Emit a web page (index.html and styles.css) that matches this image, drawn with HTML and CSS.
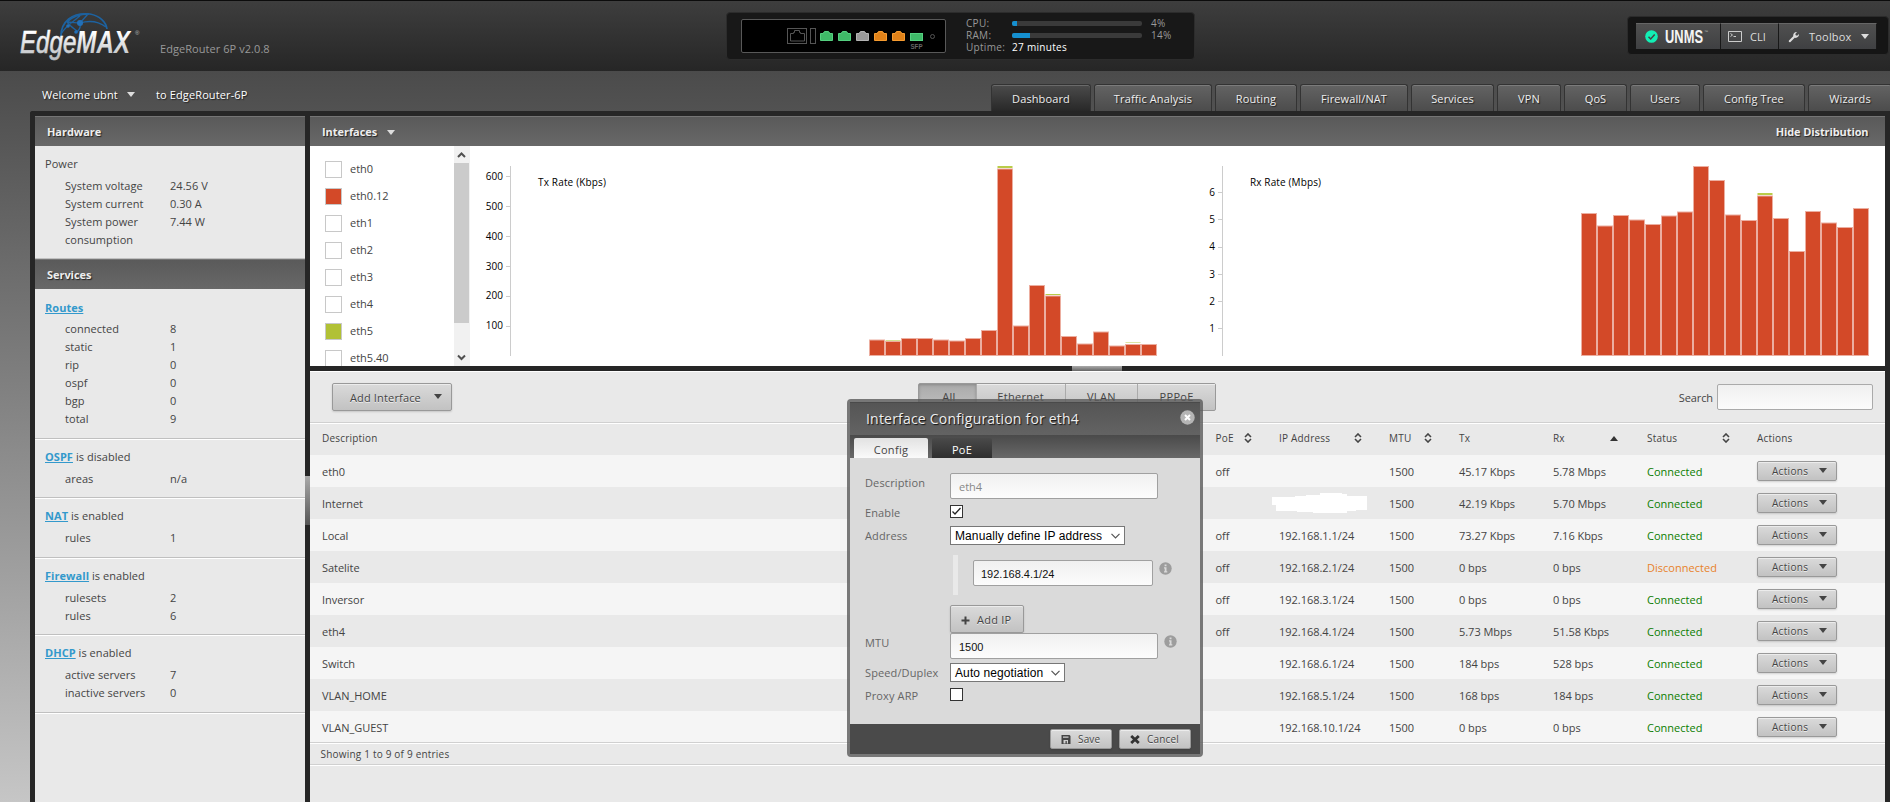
FILE: index.html
```html
<!DOCTYPE html>
<html lang="en">
<head>
<meta charset="utf-8">
<title>EdgeRouter 6P</title>
<link rel="stylesheet" href="styles.css">
</head>
<body>
<svg class="defs" width="0" height="0">
  <symbol id="sort" viewBox="0 0 8 10"><path d="M1 4 4 1 7 4M1 6l3 3 3-3" fill="none" stroke="#444" stroke-width="1.6"/></symbol>
  <symbol id="info" viewBox="0 0 13 13"><circle cx="6.5" cy="6.5" r="6.2" fill="#9d9d9d"/><path d="M5.6 2.5h1.9v1.7H5.600zM5 5.300h2.500v4H8.300v1.200H5v-1.200h.7V6.500H5z" fill="#dadada"/></symbol>
  <symbol id="rj45" viewBox="0 0 13 10"><path d="M.5 2.500h3V1.500h1V.5h4v1h1v1h3v7H.5z" fill="var(--f)" stroke="var(--s)"/></symbol>
</svg>

<header class="top">
  <div class="logo">
    <svg width="124" height="50" viewBox="0 0 124 50">
      <defs><linearGradient id="lg" x1="0" y1="0" x2="0" y2="1"><stop offset="0.2" stop-color="#fff"/><stop offset="1" stop-color="#b9bcc0"/></linearGradient></defs>
      <g fill="none" stroke="#1d62a0" stroke-width="1.300">
        <path d="M43 24C43 10 54 0 72 2c10 2 16 8 17 15" stroke-width="1.700"/>
        <path d="M43 22c3-6 10-11 19-18M49 10c5 0 9 1 13 1M49 10c3 4 6 6 10 9M62 11c1 3 0 6-3 9M62 11c10-3 18-2 26 4M49 10c6-6 14-8 22-8M62 11l8-9"/>
      </g>
      <g fill="#2270b8"><circle cx="62" cy="11" r="3"/><circle cx="50" cy="14" r="1.800"/><circle cx="58" cy="20" r="1.800"/></g>
      <text x="2" y="41" font-family="Liberation Sans" font-style="italic" font-size="31" fill="url(#lg)" textLength="110" lengthAdjust="spacingAndGlyphs"><tspan stroke="url(#lg)" stroke-width=".6">Edge</tspan><tspan font-weight="bold">MAX</tspan></text>
      <text x="117" y="23" font-family="Liberation Sans" font-size="6" fill="#bbb">®</text>
    </svg>
  </div>
  <div class="model">EdgeRouter 6P v2.0.8</div>
  <div class="stats">
    <div class="device">
      <svg width="203" height="32" viewBox="0 0 203 32">
        <g fill="none" stroke="#555"><rect x="45.500" y="8.500" width="19" height="15"/><path d="M48.500 13.500h3v-1h1v-2h5v2h1v1h4v7.500h-14z"/><rect x="68.500" y="8.500" width="5" height="15"/></g>
        <use href="#rj45" class="green" x="78" y="11" width="13" height="10"/>
        <use href="#rj45" class="green" x="96" y="11" width="13" height="10"/>
        <use href="#rj45" class="gray" x="114" y="11" width="13" height="10"/>
        <use href="#rj45" class="orange" x="132" y="11" width="13" height="10"/>
        <use href="#rj45" class="orange" x="150" y="11" width="13" height="10"/>
        <rect x="168.500" y="13.500" width="12" height="7" fill="#3fb968" stroke="#55d080"/>
        <text x="168.500" y="29" class="sfp" textLength="12" lengthAdjust="spacingAndGlyphs">SFP</text>
        <circle cx="190.500" cy="16.500" r="2" fill="none" stroke="#555"/>
      </svg>
    </div>
    <div class="meters">
      <span>CPU:</span><i class="meter"><b style="width:5px"></b></i><span>4%</span>
      <span>RAM:</span><i class="meter"><b style="width:18px"></b></i><span>14%</span>
      <span>Uptime:</span><span class="up">27 minutes</span>
    </div>
  </div>
  <div class="tools">
    <div class="tool unms"><svg width="13" height="13" viewBox="0 0 13 13"><circle cx="6.500" cy="6.500" r="6.300" fill="#12efb5"/><path d="M3.500 6.800 5.700 9l4-4.500" fill="none" stroke="#444" stroke-width="1.500"/></svg><svg class="word" width="44" height="16" viewBox="0 0 44 16"><text x="0" y="14.500" font-family="Liberation Sans" font-weight="bold" font-size="18" fill="#f4f4f4" textLength="38" lengthAdjust="spacingAndGlyphs">UNMS</text><text x="39" y="5" font-family="Liberation Sans" font-size="4" fill="#bbb">™</text></svg></div>
    <div class="tool cli"><svg width="14" height="11" viewBox="0 0 14 11"><path d="M.5.500h13v10H.5zM2.500 2.500l2 1.500-2 1.500M5.500 5.500h2.500" fill="none" stroke="#ccc"/></svg><span>CLI</span></div>
    <div class="tool box"><svg width="12" height="12" viewBox="0 0 12 12"><path d="M1 9.500 5.200 5.300C4.800 3 6.500.8 9 1L7.300 2.900l.4 1.400 1.400.4L11 3c.3 2.600-2 4.300-4.300 3.800L2.500 11C1.300 11.700.3 10.500 1 9.500z" fill="#ddd"/></svg><span>Toolbox</span><i class="caret light"></i></div>
  </div>
</header>

<div class="subbar">
  <span class="hello">Welcome ubnt</span><i class="caret light"></i><span class="host">to EdgeRouter-6P</span>
  <nav>
    <a class="w100 on">Dashboard</a><a class="w118">Traffic Analysis</a><a class="w82">Routing</a><a class="w108">Firewall/NAT</a><a class="w83">Services</a><a class="w64">VPN</a><a class="w63">QoS</a><a class="w70">Users</a><a class="w102">Config Tree</a><a class="w84">Wizards</a>
  </nav>
</div>

<div class="frame">
  <aside>
    <h2>Hardware</h2>
    <section class="first hw">
      <p>Power</p>
      <dl><dt>System voltage</dt><dd>24.56 V</dd><dt>System current</dt><dd>0.30 A</dd><dt>System power consumption</dt><dd>7.44 W</dd></dl>
    </section>
    <h2>Services</h2>
    <section class="first rt">
      <p><a>Routes</a></p>
      <dl><dt>connected</dt><dd>8</dd><dt>static</dt><dd>1</dd><dt>rip</dt><dd>0</dd><dt>ospf</dt><dd>0</dd><dt>bgp</dt><dd>0</dd><dt>total</dt><dd>9</dd></dl>
    </section>
    <section><p><a>OSPF</a> is disabled</p><dl><dt>areas</dt><dd>n/a</dd></dl></section>
    <section><p><a>NAT</a> is enabled</p><dl><dt>rules</dt><dd>1</dd></dl></section>
    <section><p><a>Firewall</a> is enabled</p><dl><dt>rulesets</dt><dd>2</dd><dt>rules</dt><dd>6</dd></dl></section>
    <section><p><a>DHCP</a> is enabled</p><dl><dt>active servers</dt><dd>7</dd><dt>inactive servers</dt><dd>0</dd></dl></section>
    <section class="rest"></section>
  </aside>
  <div class="vsplit"><i></i></div>
  <main>
    <h2 class="ih"><span>Interfaces</span><i class="caret light"></i><span class="hide">Hide Distribution</span></h2>
    <div class="dist">
      <ul class="legend">
        <li><i></i>eth0</li><li><i class="red"></i>eth0.12</li><li><i></i>eth1</li><li><i></i>eth2</li><li><i></i>eth3</li><li><i></i>eth4</li><li><i class="lime"></i>eth5</li><li><i></i>eth5.40</li>
      </ul>
      <div class="scroll"><svg width="15" height="17" viewBox="0 0 15 17"><path d="M4 11l3.500-3.500L11 11" fill="none" stroke="#505050" stroke-width="2"/></svg><i></i><svg width="15" height="17" viewBox="0 0 15 17"><path d="M4 6.500 7.500 10 11 6.500" fill="none" stroke="#505050" stroke-width="2"/></svg></div>
      <svg class="charts" width="1415" height="220" viewBox="470 146 1415 220">
        <path d="M510.500 166v190M506 176.500h4M506 206.500h4M506 236.500h4M506 266.500h4M506 296.500h4M506 326.500h4M1222.500 166v190M1218 192.500h4M1218 219.500h4M1218 247.500h4M1218 274.500h4M1218 301.500h4M1218 328.500h4" stroke="#ccc" fill="none"/>
        <g text-anchor="end"><text x="503" y="180">600</text><text x="503" y="210">500</text><text x="503" y="240">400</text><text x="503" y="270">300</text><text x="503" y="299">200</text><text x="503" y="329">100</text>
        <text x="1215" y="196">6</text><text x="1215" y="223">5</text><text x="1215" y="250">4</text><text x="1215" y="278">3</text><text x="1215" y="305">2</text><text x="1215" y="332">1</text></g>
        <text x="538" y="186" textLength="68">Tx Rate (Kbps)</text><text x="1250" y="186" textLength="71">Rx Rate (Mbps)</text>
        <g fill="#b9cc4a"><rect x="997.500" y="166" width="15" height="2"/><rect x="885.500" y="340" width="15" height="1" opacity=".6"/><rect x="1045.500" y="294" width="15" height="1"/><rect x="1125.500" y="342" width="15" height="1" opacity=".5"/><rect x="1757.500" y="193" width="15" height="2"/></g>
        <g fill="#d34928" stroke="#ecaea0" stroke-width="1" id="bars"></g>
      </svg>
    </div>
    <div class="hsplit"><i></i></div>
    <div class="toolbar">
      <button class="btn add">Add Interface<i class="caret"></i></button>
      <div class="seg"><b class="sel">All</b><b>Ethernet</b><b>VLAN</b><b>PPPoE</b></div>
      <label>Search<input type="text"></label>
    </div>
    <div class="grid head"><span>Description</span><span>PoE<svg class="s1"><use href="#sort"/></svg></span><span>IP Address<svg class="s2"><use href="#sort"/></svg></span><span>MTU<svg class="s3"><use href="#sort"/></svg></span><span>Tx</span><span>Rx<i class="asc"></i></span><span>Status<svg class="s4"><use href="#sort"/></svg></span><span>Actions</span></div>
    <div class="rows" id="rows"></div>
    <div class="foot">Showing 1 to 9 of 9 entries</div>
    <div class="blank"></div>
  </main>
</div>

<div class="dialog">
  <div class="title">Interface Configuration for eth4<svg width="15" height="15" viewBox="0 0 15 15"><circle cx="7.500" cy="7.500" r="7.200" fill="#b5b5b5"/><path d="M5 5l5 5M10 5l-5 5" stroke="#fff" stroke-width="2"/></svg></div>
  <div class="tabs"><b class="cfg">Config</b><b class="poe">PoE</b></div>
  <div class="form">
    <div class="f f1"><label>Description</label><div class="inp ph">eth4</div></div>
    <div class="f f2"><label>Enable</label><div class="chk"><svg width="11" height="11" viewBox="0 0 11 11"><path d="M1.500 5.500 4 8l5.500-6" fill="none" stroke="#222" stroke-width="1.300"/></svg></div></div>
    <div class="f f3"><label>Address</label><div class="select wide">Manually define IP address<svg width="9" height="6" viewBox="0 0 9 6"><path d="M.5.800l4 4 4-4" fill="none" stroke="#555" stroke-width="1.200"/></svg></div></div>
    <div class="f f4"><label></label><div class="ip"><div class="inp short"><span>192.168.4.1/24</span></div><svg class="inf" width="13" height="13"><use href="#info"/></svg></div></div>
    <div class="f f5"><label></label><button class="btn addip"><svg width="9" height="9" viewBox="0 0 9 9"><path d="M4.500.500v8M.5 4.500h8" stroke="#444" stroke-width="2"/></svg>Add IP</button></div>
    <div class="f f6"><label>MTU</label><div class="inp"><span>1500</span></div><svg class="inf" width="13" height="13"><use href="#info"/></svg></div>
    <div class="f f7"><label>Speed/Duplex</label><div class="select">Auto negotiation<svg width="9" height="6" viewBox="0 0 9 6"><path d="M.5.800l4 4 4-4" fill="none" stroke="#555" stroke-width="1.200"/></svg></div></div>
    <div class="f f8"><label>Proxy ARP</label><div class="chk"></div></div>
  </div>
  <div class="buttons">
    <button class="btn save"><svg width="10" height="9" viewBox="0 0 10 9"><path d="M1 0h7.500l1 1v8H.5V.5z" fill="#444"/><path d="M2 1.500h5.500v1.300H2zM2.500 5h4.500v3.500H5.800V6H4.500v2.500h-2z" fill="#d0d0d0"/></svg>Save</button>
    <button class="btn cancel"><svg width="10" height="9" viewBox="0 0 10 9"><path d="M1.200 1l7.600 7M8.800 1 1.200 8" stroke="#333" stroke-width="2.800"/></svg>Cancel</button>
  </div>
</div>
<script src="app.js"></script>
</body>
</html>
```
FILE: styles.css
```css
* { box-sizing: border-box; }
html, body { height: 100%; }
body {
  margin: 0; overflow: hidden; position: relative; display: flex; flex-direction: column;
  font-family: "Open Sans", sans-serif; font-size: 11px; line-height: 18px; color: #444;
  background: linear-gradient(#4b4b4b 71px, #c6c6c6 802px);
}
h2, p, ul, dl, dd { margin: 0; padding: 0; }
button { font: inherit; color: inherit; padding: 0; }
.defs { position: absolute; }
.caret { display: inline-block; border: 4px solid transparent; border-top: 5px solid #444; border-bottom: 0; }
.caret.light { border-top-color: #ddd; }

.top { height: 71px; flex: none; display: flex; align-items: flex-start; border-top: 1px solid #0c0c0c; background: linear-gradient(#3e3e3e, #262626); }
.logo { margin: 11px 0 0 18px; width: 124px; height: 50px; }
.logo svg, .word { overflow: visible; }
.model { margin: 39px 0 0 18px; width: 566px; color: #999; letter-spacing: .06px; }
.stats { margin-top: 11px; width: 469px; height: 48px; background: #181818; border: 1px solid #2c2c2c; border-radius: 4px; display: flex; padding: 6px 0 0 14px; }
.device { width: 205px; height: 34px; background: #000; border: 1px solid #585858; border-radius: 2px; }
.device svg { display: block; }
.green { --f: #3fb968; --s: #55d080; }
.gray { --f: #999; --s: #b4b4b4; }
.orange { --f: #e08219; --s: #f79c30; }
.sfp { font: bold 7px "Liberation Sans"; fill: #666; }
.meters { margin: -2px 0 0 20px; display: grid; grid-template-columns: 46px 139px auto; grid-auto-rows: 12px; line-height: 12px; font-size: 10px; color: #999; letter-spacing: .3px; height: 38px; align-items: center; }
.meter { display: block; width: 130px; height: 5px; background: #3a3a3a; border-radius: 2px; overflow: hidden; }
.meter b { display: block; height: 5px; background: #1590d0; }
.up { color: #fff; }
.tools { margin: 15px 0 0 432px; width: 262px; height: 39px; background: #151515; border: 1px solid #2b2b2b; border-radius: 4px; padding: 6px 0 0 8px; display: flex; }
.tool { height: 26px; display: flex; align-items: center; background: linear-gradient(#505050, #3f4042); border-top: 1px solid #666; border-right: 1px solid #181818; color: #ddd; }
.unms { width: 85px; padding-left: 9px; gap: 7px; padding-bottom: 1px; }
.cli { width: 58px; padding-left: 7px; gap: 8px; }
.box { width: 98px; padding-left: 9px; gap: 9px; letter-spacing: .2px; }

.subbar { height: 40px; flex: none; display: flex; padding-left: 42px; color: #fff; line-height: 48px; text-shadow: 1px 1px 1px #222; letter-spacing: .12px; position: relative; z-index: 1; }
.hello { width: 76px; flex: none; white-space: nowrap; }
.subbar .caret { margin: 21px 21px 0 9px; align-self: flex-start; flex: none; }
.host { width: 835px; flex: none; }
nav { display: flex; gap: 3px; padding-top: 13px; flex: none; }
nav a { height: 27px; flex: none; line-height: 28px; text-align: center; background: linear-gradient(#636363, #4c4c4c); border: 1px solid #333; border-bottom: 0; border-radius: 3px 3px 0 0; box-shadow: inset 0 1px #7b7b7b; color: #eee; }
nav .on { background: linear-gradient(#4b4b4b, #282828); box-shadow: inset 0 1px #6a6a6a; }
.w100 { width: 100px; } .w118 { width: 118px; } .w82 { width: 82px; } .w108 { width: 108px; } .w83 { width: 83px; }
.w64 { width: 64px; } .w63 { width: 63px; } .w70 { width: 70px; } .w102 { width: 102px; } .w84 { width: 84px; }

.frame { flex: 1; margin-left: 30px; border: 5px solid #262626; border-bottom: 0; border-radius: 3px 0 0 0; display: flex; background: #262626; min-height: 0; }
aside { width: 270px; display: flex; flex-direction: column; }
h2 { flex: none; height: 30px; line-height: 30px; padding-left: 12px; font-size: 11px; font-weight: bold; color: #eee; text-shadow: 1px 1px 1px #222; border-top: 1px solid #757575; background: linear-gradient(#5a5a5a, #686868); letter-spacing: -.05px; }
section { background: #e9e9e9; border-top: 1px solid #fff; border-bottom: 1px solid #c0c0c0; padding: 8px 0 9.400px 10px; letter-spacing: .05px; }
section.first { border-top: 0; padding-top: 9px; }
section.hw { padding-bottom: 9px; }
section.rt { padding: 10px 0 10px 10px; }
section.rt dl { padding-top: 3px; }
section.rest { flex: 1; border-bottom: 0; }
section a { color: #3399cc; font-weight: bold; text-decoration: underline; }
dl { padding: 4px 0 0 20px; display: grid; grid-template-columns: 105px auto; }
dt { width: 90px; }
.vsplit { width: 5px; padding-top: 360px; }
.vsplit i { display: block; height: 49px; background: linear-gradient(#aaa, #555); }
main { flex: 1; display: flex; flex-direction: column; min-width: 0; }
.ih { display: flex; }
.ih .caret { margin: 13px 0 0 10px; }
.hide { margin: 0 16.500px 0 auto; letter-spacing: -.1px; }
.dist { height: 220px; flex: none; background: #fff; display: flex; overflow: hidden; }
.legend { list-style: none; width: 144px; padding: 15px 0 0 15px; }
.legend li { display: flex; gap: 8px; height: 27px; line-height: 15px; }
.legend i { width: 17px; height: 17px; border: 1px solid #c8c8c8; }
.legend .red { background: #d34928; } .legend .lime { background: #b1c135; }
.scroll { width: 16px; background: #f1f1f1; display: flex; flex-direction: column; }
.scroll svg { display: block; flex: none; }
.scroll i { width: 15px; height: 160px; background: #cbcbcb; margin-bottom: 26px; }
.charts { display: block; flex: none; }
.charts text { font-size: 10px; fill: #000; }
.hsplit { height: 5px; flex: none; padding-left: 762px; }
.hsplit i { display: block; width: 50px; height: 5px; background: linear-gradient(#aaa, #666); }
.toolbar { height: 52px; flex: none; background: #e9e9e9; border-top: 1px solid #fff; border-bottom: 1px solid #d0d0d0; display: flex; align-items: flex-start; padding-left: 22px; }
.btn { display: flex; align-items: center; border: 1px solid #999; border-radius: 2px; background: linear-gradient(#dadada, #c2c2c2); box-shadow: inset 0 1px #ececec, 0 1px 2px rgba(0,0,0,.15); text-shadow: 0 1px #eee; color: #444; }
.add { width: 120px; height: 28px; margin-top: 11px; padding: 2px 0 0 17px; letter-spacing: .15px; }
.add .caret { margin: -4px 0 0 13px; }
.seg { margin: 11px 0 0 466px; width: 298px; height: 28px; display: flex; border: 1px solid #999; border-radius: 2px; background: linear-gradient(#dadada, #c2c2c2); }
.seg b { font-weight: normal; line-height: 26px; text-align: center; border-left: 1px solid #aaa; width: 89px; letter-spacing: .3px; box-shadow: inset 0 1px #ececec; }
.seg .sel { width: 57px; border-left: 0; background: linear-gradient(#aaa, #c0c0c0); box-shadow: inset 0 1px 3px #888; padding-left: 3px; }
.seg b:nth-child(3) { width: 73px; } .seg b:nth-child(4) { width: 78px; }
.toolbar label { margin: 12px 12px 0 auto; display: flex; line-height: 28px; gap: 4px; letter-spacing: -.1px; }
.toolbar input { width: 156px; height: 26px; border: 1px solid #aaa; border-radius: 2px; background: linear-gradient(#f0f0f0, #fcfcfc); }
.grid { display: grid; grid-template-columns: 893.500px 63.500px 110px 70px 94px 94px 110px auto; padding-left: 12px; }
.head { height: 32px; flex: none; background: #e9e9e9; border-top: 1px solid #fff; line-height: 28px; align-content: start; font-size: 10px; letter-spacing: .2px; }
.head span { display: flex; align-items: center; height: 28px; }
.head svg { width: 8px; height: 10px; }
.s1 { margin-left: 10px; } .s2 { margin-left: 24px; } .s3 { margin-left: 13px; } .s4 { margin-left: 45px; }
.asc { border: 4px solid transparent; border-bottom: 5px solid #333; border-top: 0; margin-left: 45px; }
.row { height: 32px; line-height: 34px; background: #e9e9e9; letter-spacing: -.03px; }
.row:nth-child(odd) { background: #f5f5f5; }
.ok { color: #0a7d00; } .bad { color: #e8822a; }
.grid .ok, .grid .bad { letter-spacing: .02px; }
.act { width: 80px; height: 20px; margin-top: 6px; padding-left: 14px; font-size: 10px; letter-spacing: .3px; line-height: 18px; }
.act .caret { margin: -2px 0 0 11px; }
.blob { display: block; margin: 6px 0 0 -7px; }
.foot { height: 23px; flex: none; background: #e9e9e9; border-top: 1px solid #d0d0d0; border-bottom: 1px solid #d0d0d0; box-shadow: inset 0 1px #fff; padding-left: 10.500px; line-height: 22px; font-size: 10px; letter-spacing: .2px; margin-top: -1px; }
.blank { flex: 1; background: #e9e9e9; border-top: 1px solid #fff; }

.dialog { position: absolute; left: 847px; top: 399px; width: 356px; height: 358px; border: 3px solid rgba(90,90,90,.8); border-radius: 4px; display: flex; flex-direction: column; z-index: 5; background-clip: padding-box; }
.title { height: 33px; line-height: 32px; padding-left: 16px; font-size: 14px; letter-spacing: .2px; color: #eee; text-shadow: 1px 1px 1px #111; background: linear-gradient(#555, #636363); border-top: 1px solid #4a4a4a; display: flex; }
.title svg { margin: 7px 5px 0 auto; }
.tabs { height: 23px; padding: 3px 4px 0; display: flex; gap: 4px; background: linear-gradient(#4a4a4a, #686868); }
.tabs b { font-weight: normal; text-align: center; line-height: 24px; height: 20px; border-radius: 2px 2px 0 0; letter-spacing: .3px; }
.cfg { width: 74px; background: linear-gradient(#e2e2e2, #fafafa); }
.poe { width: 60px; background: linear-gradient(#4a4a4a, #2e2e2e); color: #fff; }
.form { height: 266px; background: #dadada; padding: 15px 0 0 15px; color: #666; }
.f { display: flex; letter-spacing: .12px; }
.f label { width: 85px; flex: none; }
.f1 { height: 32px; line-height: 20px; } .f2 { height: 21px; line-height: 16px; } .f3 { height: 29px; line-height: 20px; }
.f4 { height: 50px; } .f5 { height: 28px; } .f6 { height: 30px; line-height: 20px; } .f7 { height: 25px; line-height: 20px; } .f8 { line-height: 16px; }
.inp { width: 208px; height: 26px; border: 1px solid #a0a0a0; border-radius: 2px; background: linear-gradient(#f0f0f0, #fcfcfc); line-height: 27px; padding-left: 8px; color: #111; font-family: "Liberation Sans", sans-serif; letter-spacing: 0; }
.inp.short { padding-left: 7px; }
.ph { color: #888; font-family: "Open Sans", sans-serif; line-height: 26px; }
.chk { width: 13px; height: 13px; border: 1px solid #333; background: #fff; line-height: 0; }
.select { width: 115px; height: 19px; border: 1px solid #777; background: #fff; color: #000; font: 12px/18px "Liberation Sans", sans-serif; padding: 0 4px; display: flex; justify-content: space-between; align-items: center; letter-spacing: .1px; white-space: nowrap; }
.wide { width: 175px; }
.ip { height: 40px; margin-left: 3px; border-left: 5px solid #e9e9e9; padding: 5px 0 0 15px; display: flex; }
.short { width: 180px; }
.inf { margin: 2px 0 0 6px; flex: none; }
.addip { width: 74px; height: 28px; padding: 2px 0 0 10px; gap: 7px; letter-spacing: .25px; }
.buttons { height: 30px; background: #4a4a4a; display: flex; padding: 5px 0 0 200px; gap: 7px; }
.buttons .btn { height: 20px; padding-left: 10px; gap: 7px; font-size: 10px; letter-spacing: .15px; }
.save { width: 62px; } .cancel { width: 72px; }
```
FILE: app.js
```js
const BASE = 355.5;
const tx = [340, 341.5, 338.5, 338.5, 340, 341, 338.5, 330.5, 169, 326, 285.5, 296, 336.5, 344, 332, 346, 344.5, 344.5];
const rx = [213.5, 226, 215.5, 220, 224.5, 216, 212, 166.5, 180.5, 215, 220.5, 196, 218.5, 251.5, 211.5, 223, 227.5, 208.5];
const bar = (x0) => (y, i) => `<rect x="${x0 + i * 16}" y="${y}" width="15" height="${BASE - y}"/>`;
document.getElementById('bars').innerHTML = tx.map(bar(869.5)).join('') + rx.map(bar(1581.5)).join('');

const rows = [
  ['eth0', 'off', '', '45.17 Kbps', '5.78 Mbps'],
  ['Internet', '', null, '42.19 Kbps', '5.70 Mbps'],
  ['Local', 'off', '192.168.1.1/24', '73.27 Kbps', '7.16 Kbps'],
  ['Satelite', 'off', '192.168.2.1/24', '0 bps', '0 bps', true],
  ['Inversor', 'off', '192.168.3.1/24', '0 bps', '0 bps'],
  ['eth4', 'off', '192.168.4.1/24', '5.73 Mbps', '51.58 Kbps'],
  ['Switch', '', '192.168.6.1/24', '184 bps', '528 bps'],
  ['VLAN_HOME', '', '192.168.5.1/24', '168 bps', '184 bps'],
  ['VLAN_GUEST', '', '192.168.10.1/24', '0 bps', '0 bps'],
];
const blob = '<svg class="blob" width="96" height="21"><path d="M0 4h23V3h11V2h14V0h22v1h5v2h20v14H84v1h-9v2H41v-1H25v-1H4v-6H0z" fill="#fff"/></svg>';
document.getElementById('rows').innerHTML = rows.map(([name, poe, ip, t, r, down]) =>
  `<div class="grid row"><span>${name}</span><span>${poe}</span><span>${ip === null ? blob : ip}</span><span>1500</span><span>${t}</span><span>${r}</span><span class="${down ? 'bad' : 'ok'}">${down ? 'Disconnected' : 'Connected'}</span><button class="btn act">Actions<i class="caret"></i></button></div>`).join('');
```
